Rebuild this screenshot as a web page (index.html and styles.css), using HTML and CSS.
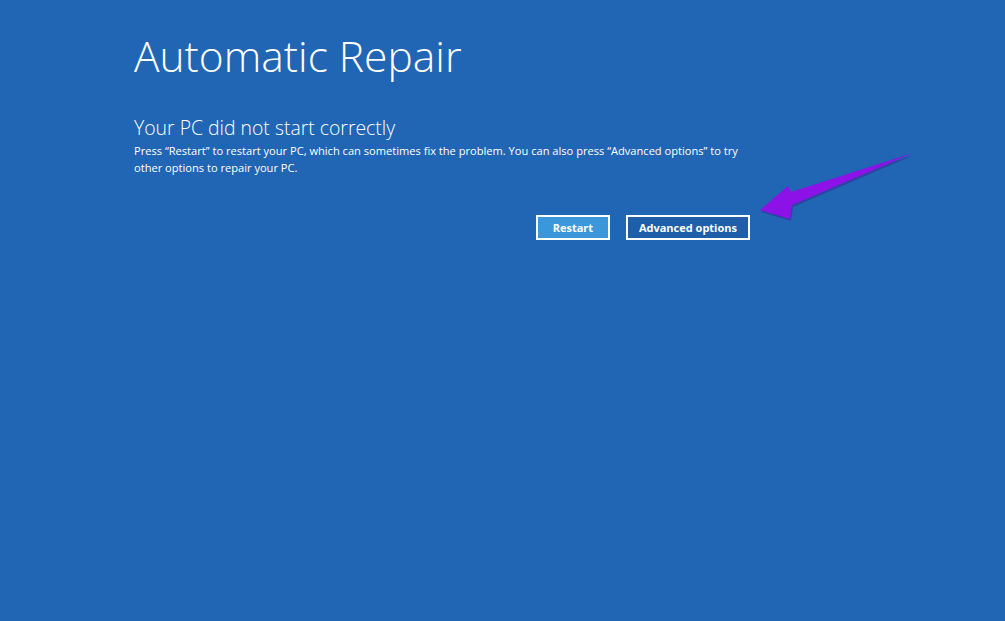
FILE: index.html
```html
<!DOCTYPE html>
<html lang="en">
<head>
  <meta charset="UTF-8">
  <title>Automatic Repair</title>
  <link rel="stylesheet" href="styles.css">
</head>
<body>
  <div class="screen">
    <div class="content">
      <h1 class="title">Automatic Repair</h1>
      <h2 class="subtitle">Your PC did not start correctly</h2>
      <p class="message">Press “Restart” to restart your PC, which can sometimes fix the problem. You can also press “Advanced options” to try other options to repair your PC.</p>
      <div class="actions">
        <button class="btn btn-primary">Restart</button>
        <button class="btn">Advanced options</button>
      </div>
    </div>

    <!-- annotation arrow -->
    <svg class="pointer" width="170" height="80" viewBox="0 0 170 80">
      <path d="M163 8 L41 47 L38 41 L10 65 L40 74 L42 60 Z" fill="#3a1a8a" opacity="0.45" transform="translate(1,2)"/>
      <path d="M163 8 L41 47 L38 41 L10 65 L40 74 L42 60 Z" fill="#8c12e8"/>
    </svg>
  </div>
</body>
</html>
```

FILE: styles.css
```css
body {
  margin: 0;
  background-color: #2166b4;
  font-family: 'Open Sans', 'Noto Sans', sans-serif;
  color: #ffffff;
}
.screen {
  position: relative;
  width: 1005px;
  height: 621px;
  overflow: hidden;
  background-color: #2166b4;
}
.content {
  width: 616px;
  padding: 28px 0 0 134px;
}
.title {
  font-size: 42.5px;
  font-weight: 300;
  margin: 0;
  line-height: 56px;
}
.subtitle {
  font-size: 19.4px;
  font-weight: 300;
  margin: 32px 0 0 0;
  line-height: 24px;
}
.message {
  font-size: 11.1px;
  margin: 2px 0 0 0;
  line-height: 17px;
}
.actions {
  display: flex;
  justify-content: flex-end;
  gap: 16px;
  margin-top: 39px;
}
.btn {
  height: 25px;
  padding: 0 11px;
  border: 2px solid #ffffff;
  background-color: #1f5fa9;
  color: #ffffff;
  font-family: 'Open Sans', 'Noto Sans', sans-serif;
  font-size: 11px;
  font-weight: 700;
}
.btn-primary {
  width: 74px;
  background-color: #3c97da;
}
.pointer {
  position: absolute;
  left: 750px;
  top: 145px;
}
```
